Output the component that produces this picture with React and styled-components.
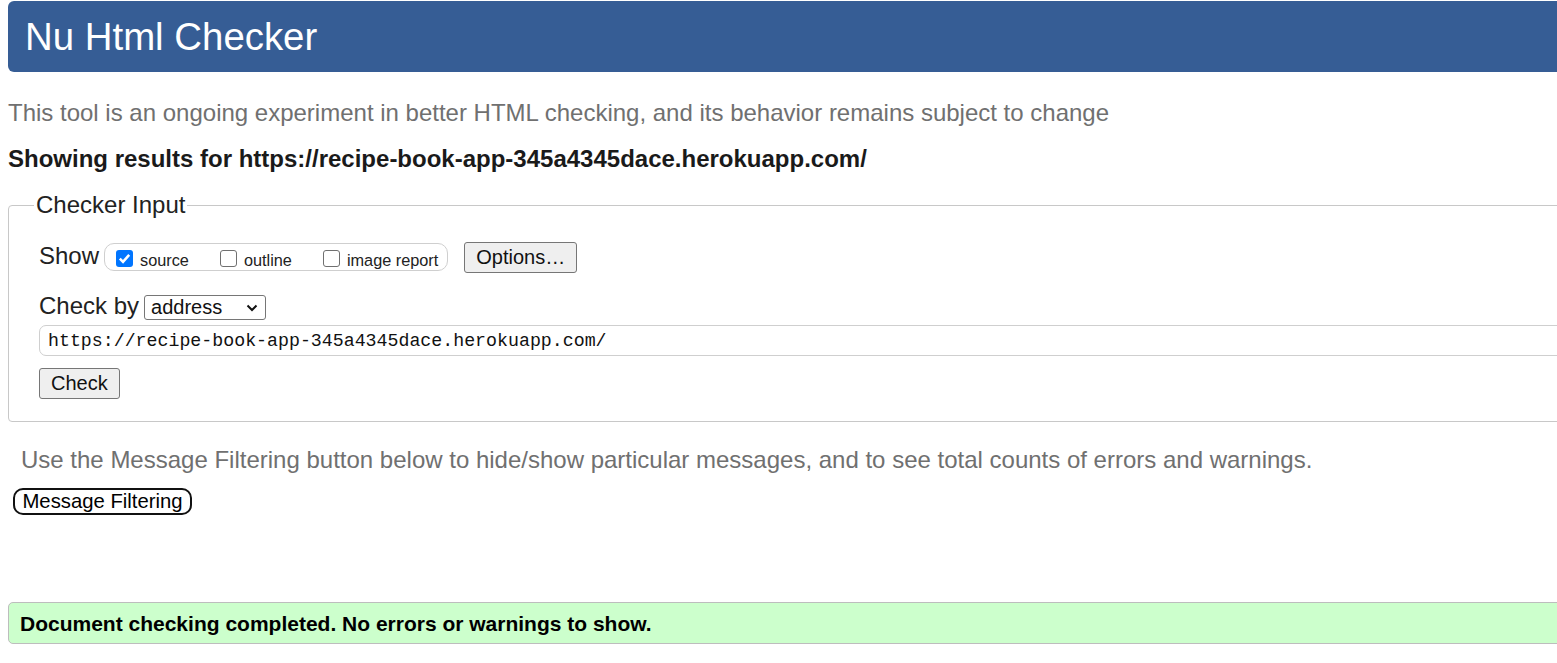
import React from "react";
import styled, { createGlobalStyle } from "styled-components";

const GlobalStyle = createGlobalStyle`
  html, body {
    margin: 0;
    padding: 0;
    background: #fff;
    overflow: hidden;
  }
  body {
    font-family: "Liberation Sans", Arial, sans-serif;
    color: #111;
  }
`;

const showOptions = [
  { label: "source", checked: true },
  { label: "outline", checked: false },
  { label: "image report", checked: false },
];

const App = () => {
  return (
    <>
      <GlobalStyle />
      <Page>
        <Header>Nu Html Checker</Header>
        <Intro>
          This tool is an ongoing experiment in better HTML checking, and its
          behavior remains subject to change
        </Intro>
        <ResultsFor>
          Showing results for https://recipe-book-app-345a4345dace.herokuapp.com/
        </ResultsFor>

        <InputSet>
          <Legend>Checker Input</Legend>
          <Row>
            <Label $gap={5}>Show</Label>
            <OptionGroup>
              {showOptions.map((opt) => (
                <Option key={opt.label}>
                  <Tick $checked={opt.checked}>
                    {opt.checked && (
                      <svg viewBox="0 0 16 16">
                        <path d="M3.6 8.2 L6.6 11.2 L12.4 4.6" />
                      </svg>
                    )}
                  </Tick>
                  <span>{opt.label}</span>
                </Option>
              ))}
            </OptionGroup>
            <Button>Options…</Button>
          </Row>
          <Row $top={19}>
            <Label $gap={5}>Check by</Label>
            <SelectWrap>
              <Select defaultValue="address">
                <option value="address">address</option>
                <option value="file">file upload</option>
                <option value="text">text input</option>
              </Select>
              <Chevron viewBox="0 0 12 8">
                <path d="M1.5 1.5 L6 6 L10.5 1.5" />
              </Chevron>
            </SelectWrap>
          </Row>
          <UrlInput
            type="text"
            defaultValue="https://recipe-book-app-345a4345dace.herokuapp.com/"
          />
          <Button>Check</Button>
        </InputSet>

        <FilterNote>
          Use the Message Filtering button below to hide/show particular
          messages, and to see total counts of errors and warnings.
        </FilterNote>
        <FilterButton>Message Filtering</FilterButton>

        <Success>Document checking completed. No errors or warnings to show.</Success>
      </Page>
    </>
  );
};

export default App;

const Page = styled.div`
  width: 1600px;
  padding: 1px 0 0 8px;
`;

const Header = styled.h1`
  margin: 0;
  height: 71px;
  line-height: 72px;
  padding-left: 17px;
  background: #365d95;
  color: #fff;
  border-radius: 6px;
  font-size: 38.4px;
  font-weight: normal;
`;

const Intro = styled.p`
  margin: 27px 0 0;
  font-size: 24px;
  line-height: 28px;
  color: #707070;
`;

const ResultsFor = styled.p`
  margin: 18px 0 0;
  font-size: 24px;
  line-height: 28px;
  font-weight: bold;
  color: #1a1a1a;
`;

const InputSet = styled.fieldset`
  margin: 18px 0 0;
  padding: 23px 0 22px 30px;
  border: 1px solid #c8c8c8;
  border-radius: 4px;
`;

const Legend = styled.legend`
  margin-left: -5px;
  padding: 0 2px;
  font-size: 24px;
  line-height: 28px;
  color: #222;
`;

const Row = styled.div`
  display: flex;
  align-items: baseline;
  margin-top: ${(p) => (p.$top ? `${p.$top}px` : "0")};
`;

const Label = styled.span`
  font-size: 24px;
  color: #222;
  margin-right: ${(p) => p.$gap}px;
`;

const OptionGroup = styled.div`
  display: flex;
  align-items: center;
  gap: 31px;
  height: 26px;
  padding: 0 9px 0 11px;
  border: 1px solid #cfcfcf;
  border-radius: 10px;
  margin-right: 16px;
`;

const Option = styled.label`
  display: flex;
  align-items: flex-end;
  gap: 7px;
  font-size: 16.3px;
  line-height: 19px;
  color: #222;
  span {
    position: relative;
    top: 3px;
  }
`;

const Tick = styled.span`
  display: block;
  box-sizing: border-box;
  width: 17px;
  height: 17px;
  margin-bottom: 3px;
  border-radius: 3px;
  border: ${(p) => (p.$checked ? "none" : "1.5px solid #707070")};
  background: ${(p) => (p.$checked ? "#0075ff" : "#fff")};
  svg {
    display: block;
    width: 17px;
    height: 17px;
    fill: none;
    stroke: #fff;
    stroke-width: 2.4;
  }
`;

const Button = styled.button`
  height: 31px;
  padding: 0 11px;
  font-family: "Liberation Sans", Arial, sans-serif;
  font-size: 20px;
  color: #111;
  background: #efefef;
  border: 1px solid #767676;
  border-radius: 3px;
`;

const SelectWrap = styled.div`
  position: relative;
  display: inline-block;
  width: 122px;
  height: 25px;
`;

const Select = styled.select`
  appearance: none;
  box-sizing: border-box;
  width: 100%;
  height: 100%;
  margin: 0;
  padding: 0 0 0 6px;
  font-family: "Liberation Sans", Arial, sans-serif;
  font-size: 20px;
  color: #111;
  background: #fff;
  border: 1px solid #767676;
  border-radius: 3px;
`;

const Chevron = styled.svg`
  position: absolute;
  right: 8px;
  top: 9px;
  width: 12px;
  height: 8px;
  fill: none;
  stroke: #111;
  stroke-width: 2;
  pointer-events: none;
`;

const UrlInput = styled.input`
  display: block;
  box-sizing: border-box;
  width: 1540px;
  height: 31px;
  margin: 5px 0 12px;
  padding: 0 8px;
  font-family: "Liberation Mono", "DejaVu Sans Mono", monospace;
  font-size: 18.25px;
  color: #111;
  border: 1px solid #cfcfcf;
  border-radius: 7px;
`;

const FilterNote = styled.p`
  margin: 24px 0 0 13px;
  font-size: 24px;
  line-height: 28px;
  color: #707070;
`;

const FilterButton = styled.button`
  display: block;
  box-sizing: border-box;
  margin: 14px 0 0 5px;
  width: 179px;
  height: 27px;
  padding: 0;
  font-family: "Liberation Sans", Arial, sans-serif;
  font-size: 20.3px;
  color: #000;
  background: #fff;
  border: 2px solid #111;
  border-radius: 10px;
`;

const Success = styled.div`
  margin-top: 87px;
  height: 38px;
  padding-top: 2px;
  line-height: 38px;
  padding-left: 11px;
  font-size: 21px;
  font-weight: bold;
  color: #000;
  background: #ccffcc;
  border: 1px solid #bdbdbd;
  border-radius: 5px;
`;
